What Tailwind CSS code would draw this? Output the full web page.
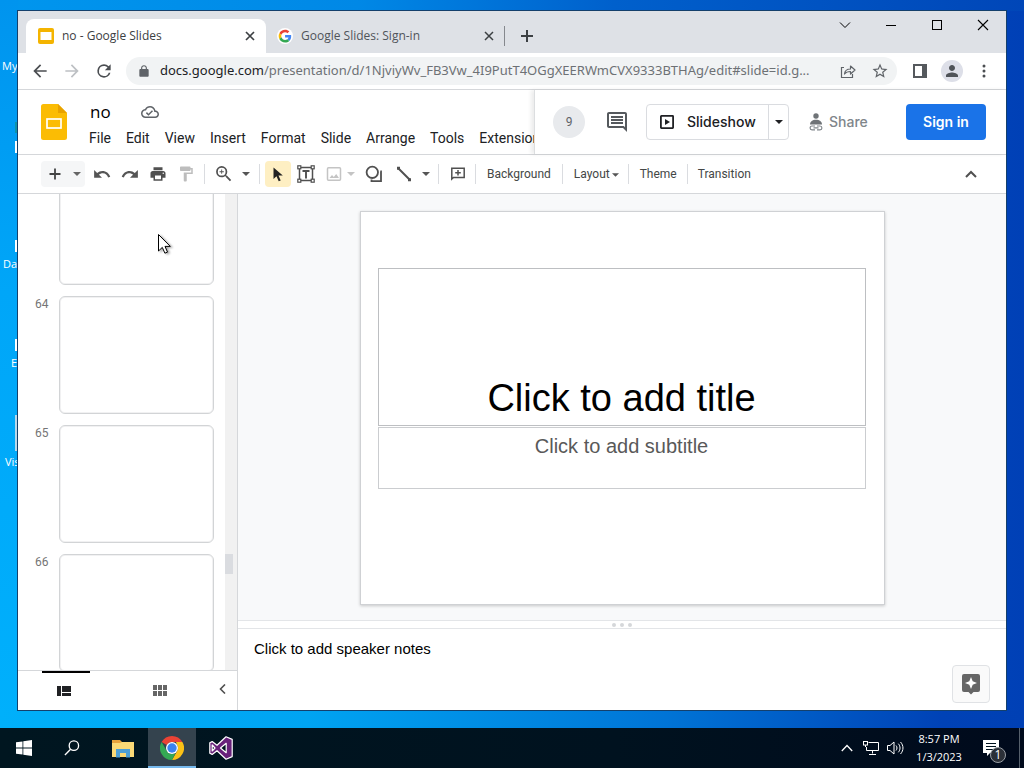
<!DOCTYPE html>
<html lang="en">
<head>
    <meta charset="UTF-8">
    <meta name="viewport" content="width=device-width, initial-scale=1.0">
    <title>no - Google Slides</title>
    <script src="https://cdn.jsdelivr.net/npm/@tailwindcss/browser@4"></script>
</head>
<body class="h-screen flex flex-col overflow-hidden font-['Open_Sans','Noto_Sans',sans-serif] text-[#3c4043]">

    <!-- Desktop -->
    <div class="relative flex-1 min-h-0 p-[18px] pt-[11px] bg-[linear-gradient(90deg,#00a2f6_0%,#0092ea_25%,#0072d8_55%,#0050c4_75%,#0040b6_100%)]">
        <div class="absolute inset-x-0 top-0 h-[11px] bg-[linear-gradient(90deg,#0096ee_0%,#0088e6_35%,#0060cc_60%,#0046b8_100%)]"></div>
        <div class="absolute inset-y-0 left-0 w-[18px] bg-[linear-gradient(180deg,#0094ee_0%,#00a6f8_40%,#00b0fc_100%)]"></div>
        <div class="absolute inset-x-0 bottom-0 h-[18px] bg-[linear-gradient(90deg,#00b0fa_0%,#00a4f2_30%,#0074d6_65%,#0042b6_92%,#0040b4_100%)]"></div>

        <!-- Desktop icons, mostly covered by the window -->
        <div class="absolute inset-y-0 left-0 w-[18px] overflow-hidden text-white text-[11px] leading-4">
            <span class="absolute left-[2px] top-[58px]">My</span>
            <i class="absolute left-[15px] top-[122px] w-1 h-[11px] bg-[#0f93a8]"></i>
            <i class="absolute left-[15px] top-[141px] w-1 h-3 bg-white"></i>
            <i class="absolute left-[15px] top-[240px] w-1 h-3 bg-white"></i>
            <span class="absolute left-[3px] top-[256px]">Da</span>
            <i class="absolute left-[15px] top-[339px] w-1 h-3 bg-white"></i>
            <span class="absolute left-[11px] top-[355px]">E</span>
            <i class="absolute left-[15px] top-[415px] w-1 h-9 bg-[#b8d8ea]"></i>
            <span class="absolute left-[5px] top-[454px]">Vis</span>
        </div>

        <!-- Browser window -->
        <div class="relative h-full flex flex-col bg-white outline outline-[#14406c]">

            <!-- Tab strip -->
            <div class="h-[42px] shrink-0 flex items-end bg-[#dee1e6] pl-2">
                <div class="h-[34px] w-60 flex items-center bg-white rounded-t-lg pl-3 pr-[10px] text-xs">
                    <svg class="w-4 h-4 mr-2" viewBox="0 0 16 16"><rect width="16" height="16" rx="2" fill="#f4b400"/><rect x="2.5" y="4" width="11" height="8" fill="#fff"/></svg>
                    <span class="flex-1">no - Google Slides</span>
                    <button class="w-3 h-3" aria-label="Close tab"><svg viewBox="0 0 12 12" stroke="#3c4043" stroke-width="1.7"><path d="M2 2l8 8M10 2l-8 8"/></svg></button>
                </div>
                <div class="h-[34px] w-[238px] flex items-center pl-[11px] pr-[9px] text-xs text-[#50545a]">
                    <svg class="w-4 h-4 mr-2" viewBox="0 0 48 48"><circle cx="24" cy="24" r="24" fill="#fff"/><g transform="translate(5 5) scale(.8)"><path fill="#EA4335" d="M24 9.5c3.54 0 6.71 1.22 9.21 3.6l6.85-6.85C35.9 2.38 30.47 0 24 0 14.62 0 6.51 5.38 2.56 13.22l7.98 6.19C12.43 13.72 17.74 9.5 24 9.5z"/><path fill="#4285F4" d="M46.98 24.55c0-1.57-.15-3.09-.38-4.55H24v9.02h12.94c-.58 2.96-2.26 5.48-4.78 7.18l7.73 6c4.51-4.18 7.09-10.36 7.09-17.65z"/><path fill="#FBBC05" d="M10.53 28.59c-.48-1.45-.76-2.99-.76-4.59s.27-3.14.76-4.59l-7.98-6.19C.92 16.46 0 20.12 0 24c0 3.88.92 7.54 2.56 10.78l7.97-6.19z"/><path fill="#34A853" d="M24 48c6.48 0 11.93-2.13 15.89-5.81l-7.73-6c-2.15 1.45-4.92 2.3-8.16 2.3-6.26 0-11.57-4.22-13.47-9.91l-7.98 6.19C6.51 42.62 14.62 48 24 48z"/></g></svg>
                    <span class="flex-1">Google Slides: Sign-in</span>
                    <button class="w-3 h-3" aria-label="Close tab"><svg viewBox="0 0 12 12" stroke="#3c4043" stroke-width="1.5"><path d="M2 2l8 8M10 2l-8 8"/></svg></button>
                </div>
                <div class="w-px h-5 mb-[7px] bg-[#85888d]"></div>
                <button class="w-4 h-4 ml-[14px] mb-[9px]" aria-label="New tab"><svg viewBox="0 0 16 16" stroke="#3c4043" stroke-width="2"><path d="M8 2v12M2 8h12"/></svg></button>
                <div class="ml-auto self-start flex h-7 text-black">
                    <button class="w-[46px] grid place-items-center" aria-label="Search tabs"><svg class="w-3 h-3" viewBox="0 0 12 12" fill="none" stroke="currentColor"><path d="M1 3.500l5 5 5-5"/></svg></button>
                    <button class="w-[46px] grid place-items-center" aria-label="Minimize"><svg class="w-3 h-3" viewBox="0 0 12 12" stroke="currentColor"><path d="M1 6.500h10"/></svg></button>
                    <button class="w-[46px] grid place-items-center" aria-label="Maximize"><svg class="w-3 h-3" viewBox="0 0 12 12" fill="none" stroke="currentColor"><rect x="1.500" y="1.500" width="9" height="9"/></svg></button>
                    <button class="w-[46px] grid place-items-center" aria-label="Close"><svg class="w-3 h-3" viewBox="0 0 12 12" stroke="currentColor" stroke-width="1.100"><path d="M1 1l10 10M11 1L1 11"/></svg></button>
                </div>
            </div>

            <!-- Address bar -->
            <div class="h-[37px] shrink-0 flex items-center border-b border-[#d5d7da] pl-3 pr-[14px] text-[#5f6368]">
                <button class="w-5 h-5" aria-label="Back"><svg viewBox="0 0 24 24" fill="currentColor" class="text-[#4b4e52]"><path d="M20 11H7.830l5.590-5.590L12 4l-8 8 8 8 1.410-1.410L7.830 13H20v-2z"/></svg></button>
                <button class="w-5 h-5 ml-3 text-[#bdc0c4]" aria-label="Forward"><svg viewBox="0 0 24 24" fill="currentColor"><path d="M12 4l-1.410 1.410L16.170 11H4v2h12.170l-5.580 5.590L12 20l8-8z"/></svg></button>
                <button class="w-5 h-5 ml-3" aria-label="Reload"><svg viewBox="0 0 24 24" fill="currentColor" class="text-[#4b4e52]"><path d="M17.650 6.350A7.960 7.960 0 0 0 12 4a8 8 0 1 0 7.730 10h-2.080A6 6 0 1 1 12 6c1.660 0 3.140.69 4.220 1.780L13 11h7V4l-2.350 2.350z"/></svg></button>
                <div class="flex-1 min-w-0 h-7 ml-3 mr-3 pl-[11px] pr-2 rounded-full bg-[#f1f3f4] flex items-center">
                    <svg class="w-[14px] h-[14px] shrink-0" viewBox="0 0 24 24" fill="#5f6368"><path d="M18 8.500h-1V7c0-2.800-2.200-5-5-5S7 4.200 7 7v1.500H6c-1.100 0-2 .9-2 2V20c0 1.100.9 2 2 2h12c1.100 0 2-.9 2-2v-9.500c0-1.100-.9-2-2-2zM9 7c0-1.700 1.300-3 3-3s3 1.300 3 3v1.500H9V7z"/></svg>
                    <a href="#" class="flex-1 ml-[9px] mr-4 text-[13px] whitespace-nowrap text-[#6d7175] font-['Noto_Sans',sans-serif]"><span class="text-[#202124]">docs.google.com</span>/presentation/d/1NjviyWv_FB3Vw_4I9PutT4OGgXEERWmCVX9333BTHAg/edit#slide=id.g...</a>
                    <button class="w-4 h-4" aria-label="Share this page"><svg viewBox="0 0 16 16" fill="none" stroke="#5f6368" stroke-width="1.200"><path d="M4 4.500H1.500V14.500H12.500V11"/><path d="M4.500 11c.4-3.500 2.500-5 6-5V3l4.500 4-4.500 4V8.500c-2.800 0-4.500.6-6 2.500z" stroke-linejoin="round"/></svg></button>
                    <button class="w-[18px] h-[18px] ml-[15px]" aria-label="Bookmark"><svg viewBox="0 0 24 24" fill="#5f6368"><path d="M22 9.240l-7.190-.62L12 2 9.190 8.630 2 9.240l5.460 4.730L5.820 21 12 17.270 18.180 21l-1.630-7.030L22 9.240zM12 15.400l-3.760 2.270 1-4.280-3.320-2.880 4.380-.38L12 6.100l1.710 4.040 4.380.38-3.320 2.880 1 4.280L12 15.400z"/></svg></button>
                </div>
                <button class="w-4 h-4 ml-[3px]" aria-label="Side panel"><svg viewBox="0 0 16 16"><path fill="#55595d" fill-rule="evenodd" d="M1 1h14v14H1zM3 3v10h7V3z"/></svg></button>
                <button class="w-[22px] h-[22px] ml-[13px] rounded-full bg-[#dddfe8] grid place-items-center" aria-label="Profile"><svg class="w-[18px] h-[18px]" viewBox="0 0 24 24" fill="#4f5358"><path d="M12 12c2.210 0 4-1.790 4-4s-1.790-4-4-4-4 1.790-4 4 1.790 4 4 4zm0 2c-2.670 0-8 1.340-8 4v2h16v-2c0-2.660-5.330-4-8-4z"/></svg></button>
                <button class="w-4 h-4 ml-[13px]" aria-label="Menu"><svg viewBox="0 0 16 16" fill="#4b4e52"><circle cx="8" cy="3" r="1.500"/><circle cx="8" cy="8" r="1.500"/><circle cx="8" cy="13" r="1.500"/></svg></button>
            </div>

            <!-- Document header -->
            <header class="h-[65px] shrink-0 flex border-b border-[#d5d7da] font-['Roboto',sans-serif]">
                <div class="flex-1 min-w-0 overflow-hidden flex pl-[23px]">
                    <svg class="w-[26px] h-9 mt-[14px] shrink-0" viewBox="0 0 26 36"><path fill="#fbbc04" d="M2.500 0H17l9 9v24.500a2.500 2.500 0 0 1-2.500 2.500h-21A2.500 2.500 0 0 1 0 33.500v-31A2.500 2.500 0 0 1 2.500 0z"/><path fill="#e8a200" d="M17 0l9 9h-9z"/><rect x="6" y="15" width="14" height="9" fill="none" stroke="#fff" stroke-width="1.700"/></svg>
                    <div class="ml-[22px] pt-[10px]">
                        <div class="flex items-center h-6 text-black">
                            <h1 class="pl-px text-[17px] leading-6 font-['Open_Sans',sans-serif]">no</h1>
                            <svg class="w-[18px] h-[18px] ml-[30px]" viewBox="0 0 24 24" fill="#5f6368"><path d="M19.350 10.040C18.670 6.590 15.640 4 12 4 9.110 4 6.600 5.640 5.350 8.040 2.340 8.360 0 10.910 0 14c0 3.310 2.690 6 6 6h13c2.760 0 5-2.240 5-5 0-2.640-2.050-4.780-4.650-4.960zM19 18H6c-2.210 0-4-1.790-4-4 0-2.050 1.530-3.760 3.560-3.970l1.070-.11.5-.95C8.080 7.140 9.940 6 12 6c2.620 0 4.880 1.860 5.390 4.430l.3 1.500 1.530.11c1.560.1 2.780 1.410 2.780 2.960 0 1.650-1.350 3-3 3zm-9-3.820l-2.090-2.090L6.500 13.500 10 17l6.010-6.010-1.410-1.410z"/></svg>
                        </div>
                        <nav class="flex gap-[15px] mt-1 text-sm text-[#202124] whitespace-nowrap">
                            <a href="#">File</a><a href="#">Edit</a><a href="#">View</a><a href="#">Insert</a><a href="#">Format</a><a href="#">Slide</a><a href="#">Arrange</a><a href="#">Tools</a><a href="#">Extensions</a>
                        </nav>
                    </div>
                </div>
                <div class="w-[472px] shrink-0 flex items-center pl-[18px] pr-5 border-l border-[#dcdee0] shadow-[-3px_0_4px_rgba(0,0,0,0.08)] bg-white text-sm font-medium font-['Inter',sans-serif]">
                    <div class="w-8 h-8 rounded-full bg-[#e8eaed] grid place-items-center text-xs font-normal text-[#5f6368] font-['Roboto',sans-serif]">9</div>
                    <button class="w-6 h-6 ml-5" aria-label="Open comment history"><svg viewBox="0 0 24 24" fill="#55595d"><path d="M21.990 4c0-1.100-.89-2-1.990-2H4c-1.100 0-2 .9-2 2v12c0 1.100.9 2 2 2h14l4 4-.01-18zM20 4v13.170L18.830 16H4V4h16zM6 12h12v2H6zm0-3h12v2H6zm0-3h12v2H6z"/></svg></button>
                    <div class="flex h-9 ml-[17px] border border-[#dadce0] rounded text-[#202124]">
                        <button class="flex items-center pl-3 w-[121px] whitespace-nowrap"><svg class="w-4 h-4 mr-3 shrink-0" viewBox="0 0 16 16"><rect x="1.900" y="1.900" width="12.200" height="12.200" fill="none" stroke="#202124" stroke-width="1.800" rx=".5"/><path d="M6 5l5 3-5 3z" fill="#202124"/></svg>Slideshow</button>
                        <button class="w-5 grid place-items-center border-l border-[#dadce0]" aria-label="Slideshow options"><svg class="w-2 h-1" viewBox="0 0 8 4"><path d="M0 0h8L4 4z" fill="#202124"/></svg></button>
                    </div>
                    <button class="flex items-center h-9 ml-5 text-[#80868b]"><svg class="w-[14px] h-[18px] mr-[6px]" viewBox="0 0 14 18"><g fill="#6f7377"><circle cx="7" cy="3" r="2.700"/><path d="M1 11.500c0-3 2.500-4.800 6-4.800s6 1.800 6 4.800z"/></g><g fill="none" stroke="#80868b" stroke-width="1.200"><path d="M6 13H3a1.900 1.900 0 0 0 0 3.800h3M8 13h3a1.900 1.900 0 0 1 0 3.800H8M4.500 14.900h5"/></g></svg>Share</button>
                    <a href="#" class="w-20 h-9 ml-auto grid place-items-center rounded bg-[#1a73e8] text-white font-semibold">Sign in</a>
                </div>
            </header>

            <!-- Toolbar -->
            <div class="h-[39px] shrink-0 flex items-center border-b border-[#d5d7da] pl-[23px] pr-[25px] font-['Roboto',sans-serif] text-xs text-[#444746]">
                <div class="flex h-[26px] bg-[#f5f6f7] rounded-sm mr-[3px]">
                    <button class="w-7 grid place-items-center" aria-label="New slide"><svg class="w-3 h-3" viewBox="0 0 12 12" stroke="#444" stroke-width="1.800"><path d="M6 .5v11M.5 6h11"/></svg></button>
                    <button class="w-4 grid place-items-center" aria-label="New slide layout"><svg class="w-2 h-1" viewBox="0 0 8 4"><path d="M0 0h8L4 4z" fill="#666"/></svg></button>
                </div>
                <button class="w-7 h-7 grid place-items-center" aria-label="Undo"><svg class="w-[18px] h-[18px]" viewBox="0 0 24 24" fill="#555"><path d="M12.500 8c-2.650 0-5.050.99-6.900 2.600L1.500 6.500v10.500H12l-4-4c1.390-1.160 3.160-1.880 5.120-1.880 3.540 0 5.950 2.310 7.050 5.500l2.800-.8C21.400 11.030 17.550 8 12.500 8z"/></svg></button>
                <button class="w-7 h-7 grid place-items-center" aria-label="Redo"><svg class="w-[18px] h-[18px]" viewBox="0 0 24 24" fill="#555"><path d="M11.500 8c2.650 0 5.050.99 6.900 2.600l4.100-4.100v10.500H12l4-4c-1.390-1.160-3.160-1.880-5.120-1.880-3.540 0-5.950 2.310-7.050 5.500l-2.800-.8C2.600 11.030 6.450 8 11.500 8z"/></svg></button>
                <button class="w-7 h-7 grid place-items-center" aria-label="Print"><svg class="w-[18px] h-[18px]" viewBox="0 0 24 24" fill="#505050"><path d="M19 8H5c-1.660 0-3 1.340-3 3v6h4v4h12v-4h4v-6c0-1.660-1.340-3-3-3zm-3 11H8v-5h8v5zm3-7c-.55 0-1-.45-1-1s.45-1 1-1 1 .45 1 1-.45 1-1 1zm-1-9H6v4h12V3z"/></svg></button>
                <button class="w-7 h-7 grid place-items-center" aria-label="Paint format"><svg class="w-[18px] h-[18px]" viewBox="0 0 24 24" fill="#bdbdbd"><path d="M18 4V3c0-.55-.45-1-1-1H5c-.55 0-1 .45-1 1v4c0 .55.45 1 1 1h12c.55 0 1-.45 1-1V6h1v4H9v11c0 .55.45 1 1 1h2c.55 0 1-.45 1-1v-9h8V4h-3z"/></svg></button>
                <div class="w-px h-5 ml-1 mr-[5px] bg-[#dadce0]"></div>
                <button class="w-7 h-7 grid place-items-center" aria-label="Zoom"><svg class="w-[18px] h-[18px]" viewBox="0 0 24 24" fill="#505050"><path d="M15.500 14h-.79l-.28-.27A6.470 6.470 0 0 0 16 9.500 6.500 6.500 0 1 0 9.500 16c1.610 0 3.090-.59 4.230-1.570l.27.28v.79l5 4.990L20.490 19l-4.990-5zm-6 0a4.500 4.500 0 1 1 0-9 4.500 4.500 0 0 1 0 9zm2.500-4h-2v2H9v-2H7V9h2V7h1v2h2v1z" transform="translate(-2 -2) scale(1.150)"/></svg></button>
                <button class="w-4 h-7 grid place-items-center" aria-label="Zoom options"><svg class="w-2 h-1" viewBox="0 0 8 4"><path d="M0 0h8L4 4z" fill="#555"/></svg></button>
                <div class="w-px h-5 mx-[5px] bg-[#dadce0]"></div>
                <button class="w-[26px] h-[26px] grid place-items-center bg-[#feefc3] rounded-sm" aria-label="Select"><svg class="w-[10px] h-[15px]" viewBox="0 0 10 15"><path d="M.5.500v11.500l3-2.700 2.200 5 2-.9-2.200-4.900H9.800z" fill="#222"/></svg></button>
                <button class="w-[30px] h-7 grid place-items-center" aria-label="Text box"><svg class="w-[18px] h-[18px]" viewBox="0 0 18 18" fill="none" stroke="#505050"><rect x="2.500" y="2.500" width="13" height="13" stroke-width="1.500"/><path d="M5.500 6h7M9 6v7.500" stroke-width="1.900"/><g fill="#fff" stroke-width="1.200"><rect x=".8" y=".8" width="3" height="3"/><rect x="14.200" y=".8" width="3" height="3"/><rect x=".8" y="14.200" width="3" height="3"/><rect x="14.200" y="14.200" width="3" height="3"/></g></svg></button>
                <button class="w-[26px] h-7 grid place-items-center" aria-label="Insert image"><svg class="w-4 h-4" viewBox="0 0 16 16"><rect x="1.500" y="1.700" width="13" height="12.600" rx="1" fill="none" stroke="#c4c4c4" stroke-width="1.500"/><path d="M3.500 12l2.500-3 1.800 2 2.400-3 2.800 4z" fill="#c4c4c4"/></svg></button>
                <button class="w-2 h-7 grid place-items-center" aria-label="Image options"><svg class="w-2 h-1" viewBox="0 0 8 4"><path d="M0 0h8L4 4z" fill="#c4c4c4"/></svg></button>
                <button class="w-7 h-7 ml-[5px] grid place-items-center" aria-label="Shape"><svg class="w-[18px] h-[18px]" viewBox="0 0 18 18" fill="none" stroke="#505050" stroke-width="1.800"><circle cx="7.300" cy="7.300" r="5.700"/><path d="M15.300 6.500H16v9.600H6.500V14.500"/></svg></button>
                <button class="w-8 h-7 grid place-items-center" aria-label="Line"><svg class="w-4 h-4" viewBox="0 0 16 16" stroke="#505050" stroke-width="2"><path d="M2 2l12 12"/><path d="M1 2.200h3M12 13.800h3" stroke-width="3"/></svg></button>
                <button class="w-3 h-7 grid place-items-center" aria-label="Line options"><svg class="w-2 h-1" viewBox="0 0 8 4"><path d="M0 0h8L4 4z" fill="#555"/></svg></button>
                <div class="w-px h-5 ml-[6px] mr-[5px] bg-[#dadce0]"></div>
                <button class="w-7 h-7 grid place-items-center" aria-label="Add comment"><svg class="w-4 h-4" viewBox="0 0 16 16" fill="none" stroke="#505050" stroke-width="1.500"><path d="M1.800 13V2.200h12.400v9.300H3.500z"/><path d="M8 4v5.500M5.200 6.800h5.600"/></svg></button>
                <div class="w-px h-5 mx-[3px] bg-[#dadce0]"></div>
                <button class="px-2">Background</button>
                <div class="w-px h-5 mx-[3px] bg-[#dadce0]"></div>
                <button class="pl-2 pr-[6px] flex items-center">Layout<svg class="w-[7px] h-1 ml-[2px] mt-px" viewBox="0 0 8 4"><path d="M0 0h8L4 4z" fill="#555"/></svg></button>
                <div class="w-px h-5 mx-[3px] bg-[#dadce0]"></div>
                <button class="px-2">Theme</button>
                <div class="w-px h-5 mx-[2px] bg-[#dadce0]"></div>
                <button class="px-2">Transition</button>
                <button class="w-5 h-5 ml-auto grid place-items-center" aria-label="Hide the menus"><svg class="w-3 h-2" viewBox="0 0 12 8" fill="none" stroke="#505050" stroke-width="2"><path d="M1 7l5-5 5 5"/></svg></button>
            </div>

            <!-- Workspace -->
            <div class="flex-1 min-h-0 flex">
                <!-- Filmstrip -->
                <aside class="w-[220px] shrink-0 flex flex-col border-r border-[#d5d7da] font-['Roboto',sans-serif]">
                    <div class="flex-1 min-h-0 overflow-hidden flex">
                        <ol class="flex-1 flex flex-col gap-[11px] -mt-[27px] text-xs text-[#757575]">
                            <li class="flex gap-[10px] pl-[17px]"><span class="w-[14px]">63</span><div class="w-[155px] h-[118px] border border-[#d2d4d6] shadow-[inset_0_0_0_1px_#f1f1f2] rounded-md"></div></li>
                            <li class="flex gap-[10px] pl-[17px]"><span class="w-[14px]">64</span><div class="w-[155px] h-[118px] border border-[#d2d4d6] shadow-[inset_0_0_0_1px_#f1f1f2] rounded-md"></div></li>
                            <li class="flex gap-[10px] pl-[17px]"><span class="w-[14px]">65</span><div class="w-[155px] h-[118px] border border-[#d2d4d6] shadow-[inset_0_0_0_1px_#f1f1f2] rounded-md"></div></li>
                            <li class="flex gap-[10px] pl-[17px]"><span class="w-[14px]">66</span><div class="w-[155px] h-[118px] border border-[#d2d4d6] shadow-[inset_0_0_0_1px_#f1f1f2] rounded-md"></div></li>
                        </ol>
                        <div class="w-3 bg-[#f1f1f1] pt-[360px]"><div class="w-2 h-5 bg-[#dadce0]"></div></div>
                    </div>
                    <div class="h-10 shrink-0 flex border-t border-[#d5d7da]">
                        <button class="w-12 ml-6 pr-1 pb-[2px] grid place-items-center border-t-2 border-black" aria-label="Filmstrip view"><svg class="w-[14px] h-[10px]" viewBox="0 0 14 10" fill="#202124"><path d="M0 0h4v10H0zM5 0h9v6H5zM5 7h9v3H5z"/></svg></button>
                        <button class="w-12 ml-12 pr-1 grid place-items-center" aria-label="Grid view"><svg class="w-[14px] h-[11px]" viewBox="0 0 14 11" fill="#666"><path d="M0 0h4v5H0zM5 0h4v5H5zM10 0h4v5h-4zM0 6h4v5H0zM5 6h4v5H5zM10 6h4v5h-4z"/></svg></button>
                        <button class="w-5 ml-auto mr-[5px] mb-1 grid place-items-center" aria-label="Hide filmstrip"><svg class="w-[7px] h-[10px]" viewBox="0 0 7 10" fill="none" stroke="#505050" stroke-width="1.600"><path d="M6 .5L1.500 5 6 9.500"/></svg></button>
                    </div>
                </aside>

                <!-- Slide and notes -->
                <main class="flex-1 min-w-0 flex flex-col font-['Liberation_Sans',Arial,sans-serif]">
                    <div class="flex-1 min-h-0 bg-[#f8f9fa] flex justify-center pt-[17px] pb-[15px]">
                        <div class="w-[525px] bg-white border border-[#cfd1d4] shadow-[0_1px_3px_rgba(0,0,0,0.2)] pl-[17px] pr-[18px] pt-14 text-center">
                            <div class="h-[158px] border border-[#bdbfc2] flex items-end justify-center pb-[5px] text-[38px] leading-[44px] text-black">Click to add title</div>
                            <div class="h-[62px] mt-px border border-[#cbcdd0] pt-[6px] text-xl leading-6 text-[#595959]">Click to add subtitle</div>
                        </div>
                    </div>
                    <div class="h-[9px] shrink-0 border-y border-[#e3e5e8] flex items-center justify-center gap-1">
                        <i class="w-1 h-1 rounded-full bg-[#d5d7da]"></i><i class="w-1 h-1 rounded-full bg-[#d5d7da]"></i><i class="w-1 h-1 rounded-full bg-[#d5d7da]"></i>
                    </div>
                    <div class="h-[81px] shrink-0 flex justify-between pl-4 pr-4 pt-[10px]">
                        <p class="text-[15px] leading-5 text-black">Click to add speaker notes</p>
                        <button class="w-[38px] h-[38px] mt-[26px] grid place-items-center border border-[#e0e2e5] rounded bg-[#fafafa]" aria-label="Explore"><svg class="w-5 h-[22px]" viewBox="0 0 20 22"><path fill="#666" d="M3 1h14a2 2 0 0 1 2 2v14a2 2 0 0 1-2 2h-4.500L10 21.500 7.500 19H3a2 2 0 0 1-2-2V3a2 2 0 0 1 2-2z"/><path fill="#fff" d="M10 4l1.700 4.300L16 10l-4.300 1.700L10 16l-1.700-4.300L4 10l4.300-1.700z"/></svg></button>
                    </div>
                </main>
            </div>
        </div>

        <!-- Mouse pointer -->
        <svg class="absolute left-[158px] top-[234px] w-[13px] h-5 drop-shadow-[2px_1px_1px_rgba(0,0,0,0.35)]" viewBox="0 0 13 20"><path d="M.5.500v16.500l3.800-3.600 2.600 5.800 2.600-1.100L7 12.400h5.300z" fill="#fff" stroke="#000"/></svg>
    </div>

    <!-- Taskbar -->
    <footer class="h-10 shrink-0 flex bg-[linear-gradient(90deg,#001620_0%,#00121f_60%,#000a1c_100%)] text-white">
        <button class="w-12 grid place-items-center" aria-label="Start"><svg class="w-4 h-4" viewBox="0 0 16 16" fill="#fff"><path d="M0 2.300L6.500 1.400v6.100H0zM7.300 1.300L16 0v7.500H7.300zM0 8.400h6.500v6.200L0 13.700zM7.300 8.400H16V16l-8.700-1.200z"/></svg></button>
        <button class="w-12 grid place-items-center" aria-label="Search"><svg class="w-4 h-4" viewBox="0 0 17 17" fill="none" stroke="#fff" stroke-width="1.400"><circle cx="10.500" cy="6" r="5"/><path d="M7 9.800L1 16"/></svg></button>
        <div class="flex gap-px ml-[3px]">
            <button class="w-12 grid place-items-center" aria-label="File Explorer"><svg class="w-[22px] h-[19px]" viewBox="0 0 22 19"><path fill="#e8a33d" d="M0 1h8l2 2h12v3H0z"/><path fill="#fbd976" d="M0 4h8l2-1h12v15H0z"/><path fill="#4d9fd6" d="M4 10h14v8.500h-4V14H8v4.500H4z"/></svg></button>
            <button class="w-12 grid place-items-center bg-[#34434e] border-b-2 border-[#76b9ed]" aria-label="Chrome"><svg class="w-6 h-6 mt-px" viewBox="0 0 24 24"><path fill="#ea4335" d="M12 0a12 12 0 0 1 10.400 6H12a6 6 0 0 0-5.200 3L1.600 6A12 12 0 0 1 12 0z"/><path fill="#fbc116" d="M22.400 6A12 12 0 0 1 12 24l5.200-9a6 6 0 0 0 0-6L16 6z"/><path fill="#34a853" d="M1.600 6l5.200 9A6 6 0 0 0 12 18l3.400-.8L12 24A12 12 0 0 1 1.600 6z"/><circle cx="12" cy="12" r="6" fill="#fff"/><circle cx="12" cy="12" r="4.700" fill="#3b82f0"/></svg></button>
            <button class="w-12 grid place-items-center" aria-label="Visual Studio"><svg class="w-6 h-6" viewBox="0 0 24 24"><path fill="#68217a" stroke="#fff" stroke-width="1.200" stroke-linejoin="round" fill-rule="evenodd" d="M17 .8l6.200 2.600v17.200L17 23.200l-9-8.500-4.800 3.700L.8 17.200V6.800l2.400-1.200L8 9.300zM17.200 7.300L11.500 12l5.700 4.700zM3.200 9v6L6 12z"/></svg></button>
        </div>
        <div class="ml-auto flex items-center">
            <button class="w-6 h-full grid place-items-center" aria-label="Show hidden icons"><svg class="w-3 h-2" viewBox="0 0 12 8" fill="none" stroke="#fff" stroke-width="1.300"><path d="M.8 7L6 1.500 11.200 7"/></svg></button>
            <button class="w-6 h-full grid place-items-center" aria-label="Network"><svg class="w-4 h-4" viewBox="0 0 16 16" fill="none" stroke="#fff"><path d="M5.500 2.500h10v8h-12V7M9.500 10.500v3M6 14.500h7"/><rect x=".5" y="1.500" width="4" height="3.500"/><path d="M2.500 5v2"/></svg></button>
            <button class="w-6 h-full grid place-items-center" aria-label="Volume"><svg class="w-[17px] h-4" viewBox="0 0 17 16" fill="none" stroke="#fff"><path d="M.5 5.500h2.500l4-3.500v12l-4-3.500H.5zM9 5.500c1.300 1.500 1.300 3.500 0 5M11.300 3.700c2.300 2.600 2.300 6 0 8.600M13.500 2c3.300 3.600 3.300 8.400 0 12"/></svg></button>
            <div class="w-16 text-center text-[11px] leading-[18px]"><p>8:57 PM</p><p>1/3/2023</p></div>
            <button class="relative w-12 h-full grid place-items-center" aria-label="Notifications">
                <svg class="w-4 h-4 mr-[9px]" viewBox="0 0 16 16"><path fill="#fff" d="M0 0h16v13H7l-3 3v-3H0z"/><path stroke="#00121f" stroke-width="1.200" d="M3 3.500h10M3 6.500h10M3 9.500h7"/></svg>
                <span class="absolute left-[19px] top-[19px] w-4 h-4 rounded-full bg-[#2b3038] border border-[#9aa0a6] grid place-items-center text-xs leading-none">1</span>
            </button>
            <div class="w-px h-full bg-[#56606c] mr-1"></div>
        </div>
    </footer>
</body>
</html>
